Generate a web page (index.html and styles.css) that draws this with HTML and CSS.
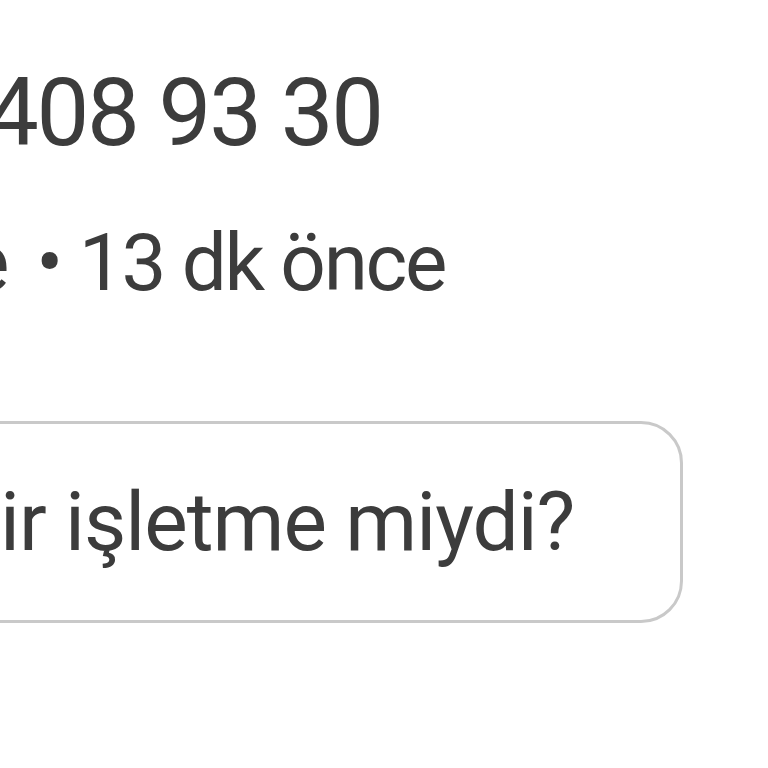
FILE: index.html
```html
<!DOCTYPE html>
<html lang="tr">
<head>
<meta charset="utf-8">
<title>İşletme</title>
<link rel="stylesheet" href="styles.css">
</head>
<body>
<main class="panel">
  <p class="phone">408 93 30</p>
  <p class="meta"><span class="meta-tail">e</span><span class="dot">•</span><span>13 dk önce</span></p>
  <button class="ask" type="button"><span class="ask-text">ir işletme miydi?</span></button>
</main>
</body>
</html>
```

FILE: styles.css
```css
html, body {
  margin: 0;
  padding: 0;
  background: #ffffff;
  overflow: hidden;
}

body {
  width: 768px;
  height: 768px;
  font-family: Roboto, "Noto Sans", sans-serif;
  color: #3c3c3c;
}

.panel {
  display: flex;
  flex-direction: column;
  align-items: flex-start;
  padding-top: 58px;
}

.phone {
  margin: 0 0 0 -14px;
  font-size: 94px;
  line-height: 110px;
  letter-spacing: -2.3px;
  white-space: nowrap;
}

.meta {
  margin: 48px 0 0 -33px;
  font-size: 80px;
  line-height: 94px;
  letter-spacing: -2.3px;
  white-space: nowrap;
  display: flex;
}

.dot {
  margin: 0 18px 0 29px;
}

.ask {
  margin: 111px 0 0 -60px;
  width: 743px;
  height: 202px;
  border: 3px solid #c9c9c9;
  border-radius: 42px;
  background: #ffffff;
  display: flex;
  align-items: center;
  justify-content: flex-start;
  padding: 0 0 0 57px;
  font-family: inherit;
  color: #3c3c3c;
  font-size: 82px;
  letter-spacing: -1px;
  white-space: nowrap;
}
```
